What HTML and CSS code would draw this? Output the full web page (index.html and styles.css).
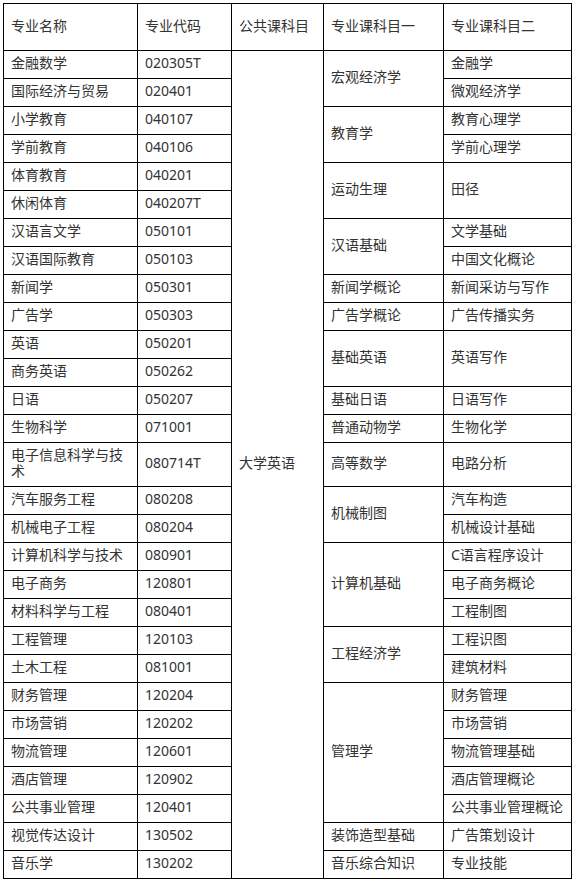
FILE: index.html
```html
<!DOCTYPE html>
<html lang="zh-CN">
<head>
<meta charset="utf-8">
<title>专业课程对照表</title>
<link rel="stylesheet" href="styles.css">
</head>
<body>
<table class="subjects">
  <colgroup>
    <col class="c1"><col class="c2"><col class="c3"><col class="c4"><col class="c5">
  </colgroup>
  <thead>
    <tr class="head">
      <th>专业名称</th><th>专业代码</th><th>公共课科目</th><th>专业课科目一</th><th>专业课科目二</th>
    </tr>
  </thead>
  <tbody>
    <tr><td>金融数学</td><td>020305T</td><td rowspan="29">大学英语</td><td rowspan="2">宏观经济学</td><td>金融学</td></tr>
    <tr><td>国际经济与贸易</td><td>020401</td><td>微观经济学</td></tr>
    <tr><td>小学教育</td><td>040107</td><td rowspan="2">教育学</td><td>教育心理学</td></tr>
    <tr><td>学前教育</td><td>040106</td><td>学前心理学</td></tr>
    <tr><td>体育教育</td><td>040201</td><td rowspan="2">运动生理</td><td rowspan="2">田径</td></tr>
    <tr><td>休闲体育</td><td>040207T</td></tr>
    <tr><td>汉语言文学</td><td>050101</td><td rowspan="2">汉语基础</td><td>文学基础</td></tr>
    <tr><td>汉语国际教育</td><td>050103</td><td>中国文化概论</td></tr>
    <tr><td>新闻学</td><td>050301</td><td>新闻学概论</td><td>新闻采访与写作</td></tr>
    <tr><td>广告学</td><td>050303</td><td>广告学概论</td><td>广告传播实务</td></tr>
    <tr><td>英语</td><td>050201</td><td rowspan="2">基础英语</td><td rowspan="2">英语写作</td></tr>
    <tr><td>商务英语</td><td>050262</td></tr>
    <tr><td>日语</td><td>050207</td><td>基础日语</td><td>日语写作</td></tr>
    <tr><td>生物科学</td><td>071001</td><td>普通动物学</td><td>生物化学</td></tr>
    <tr><td>电子信息科学与技术</td><td>080714T</td><td>高等数学</td><td>电路分析</td></tr>
    <tr><td>汽车服务工程</td><td>080208</td><td rowspan="2">机械制图</td><td>汽车构造</td></tr>
    <tr><td>机械电子工程</td><td>080204</td><td>机械设计基础</td></tr>
    <tr><td>计算机科学与技术</td><td>080901</td><td rowspan="3">计算机基础</td><td>C语言程序设计</td></tr>
    <tr><td>电子商务</td><td>120801</td><td>电子商务概论</td></tr>
    <tr><td>材料科学与工程</td><td>080401</td><td>工程制图</td></tr>
    <tr><td>工程管理</td><td>120103</td><td rowspan="2">工程经济学</td><td>工程识图</td></tr>
    <tr><td>土木工程</td><td>081001</td><td>建筑材料</td></tr>
    <tr><td>财务管理</td><td>120204</td><td rowspan="5">管理学</td><td>财务管理</td></tr>
    <tr><td>市场营销</td><td>120202</td><td>市场营销</td></tr>
    <tr><td>物流管理</td><td>120601</td><td>物流管理基础</td></tr>
    <tr><td>酒店管理</td><td>120902</td><td>酒店管理概论</td></tr>
    <tr><td>公共事业管理</td><td>120401</td><td>公共事业管理概论</td></tr>
    <tr><td>视觉传达设计</td><td>130502</td><td>装饰造型基础</td><td>广告策划设计</td></tr>
    <tr><td>音乐学</td><td>130202</td><td>音乐综合知识</td><td>专业技能</td></tr>
  </tbody>
</table>
</body>
</html>
```

FILE: styles.css
```css
html, body {
  margin: 0;
  padding: 0;
  background: #fff;
}

body {
  padding: 3px;
  font-family: "Noto Sans", "Noto Sans CJK SC", sans-serif;
  font-size: 14px;
  color: #333;
}

.subjects {
  border-collapse: collapse;
  table-layout: fixed;
  width: 568px;
}

.c1 { width: 134px; }
.c2 { width: 94px; }
.c3 { width: 92px; }
.c4 { width: 120px; }
.c5 { width: 128px; }

.subjects th,
.subjects td {
  border: 1px solid #000;
  padding: 4px 4px 7px 7px;
  line-height: 16px;
  text-align: left;
  vertical-align: middle;
  font-weight: normal;
}

.subjects .head th {
  height: 35px;
}
```
